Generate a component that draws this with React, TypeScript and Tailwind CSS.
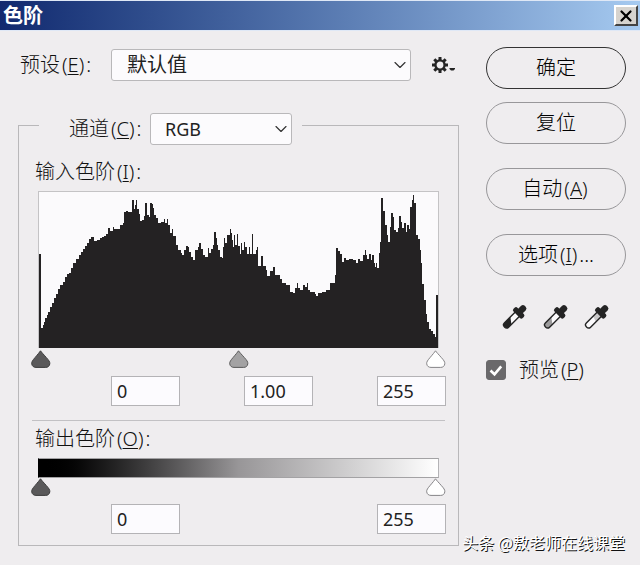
import { useState } from 'react';
import type { ReactNode } from 'react';
import { ChevronDown, X } from 'lucide-react';

// [x, top] pairs, every step runs on to the x of the next one
const HISTOGRAM: [number, number][] = [
  [1, 63], [3, 137], [5, 134], [6, 131], [7, 127], [9, 124], [10, 121], [12, 116], [14, 112], [16, 107],
  [18, 103], [20, 98], [22, 94], [25, 91], [27, 86], [29, 83], [31, 82], [33, 77], [35, 72], [38, 68],
  [41, 64], [43, 61], [45, 58], [47, 55], [49, 52], [51, 48], [53, 46], [56, 50], [59, 49], [62, 47],
  [64, 46], [66, 45], [68, 43], [70, 37], [72, 40], [75, 36], [76, 38], [80, 38], [82, 34], [85, 32],
  [86, 21], [88, 20], [90, 21], [94, 9], [96, 18], [97, 14], [98, 9], [99, 18], [101, 23], [102, 30],
  [104, 29], [106, 25], [107, 12], [109, 24], [111, 26], [112, 12], [114, 13], [115, 17], [116, 24], [118, 27],
  [120, 32], [123, 31], [126, 28], [127, 32], [129, 28], [130, 34], [132, 42], [134, 38], [135, 45], [138, 54],
  [140, 59], [143, 62], [144, 64], [146, 59], [148, 55], [150, 56], [151, 61], [153, 66], [155, 69], [157, 59],
  [160, 56], [161, 52], [163, 58], [165, 64], [167, 66], [170, 57], [171, 62], [173, 58], [175, 54], [176, 41],
  [178, 47], [179, 54], [180, 59], [182, 66], [184, 67], [185, 56], [186, 47], [187, 52], [189, 44], [191, 44],
  [192, 38], [193, 42], [194, 49], [195, 56], [196, 44], [197, 54], [199, 43], [200, 55], [203, 63], [204, 52],
  [205, 59], [207, 51], [208, 56], [210, 63], [212, 56], [213, 63], [215, 43], [216, 63], [219, 59], [220, 56],
  [221, 75], [224, 65], [226, 75], [229, 79], [230, 85], [233, 80], [236, 76], [238, 84], [243, 88], [245, 92],
  [249, 94], [253, 101], [256, 102], [258, 97], [260, 92], [261, 97], [263, 99], [266, 94], [268, 96], [270, 92],
  [271, 99], [273, 101], [278, 103], [279, 105], [281, 102], [285, 101], [289, 99], [293, 92], [298, 84], [299, 57],
  [301, 60], [303, 63], [305, 71], [307, 67], [309, 69], [312, 68], [316, 69], [319, 72], [321, 68], [323, 70],
  [326, 64], [328, 59], [329, 64], [330, 68], [332, 63], [334, 69], [335, 64], [337, 72], [338, 76], [339, 72],
  [340, 77], [342, 62], [343, 51], [344, 7], [346, 20], [348, 34], [350, 44], [351, 51], [353, 36], [354, 22],
  [356, 26], [357, 39], [359, 41], [361, 37], [362, 25], [364, 31], [365, 37], [367, 32], [369, 41], [370, 34],
  [372, 38], [373, 16], [375, 9], [376, 4], [377, 12], [379, 44], [381, 48], [383, 59], [384, 72], [385, 93],
  [387, 109], [389, 123], [390, 131], [392, 138], [394, 140], [396, 143], [398, 146], [399, 104], [401, 157],
];

const HISTOGRAM_PATH = `M1 157${HISTOGRAM.map(([x, y]) => `H${x}V${y}`).join('')}H401Z`;

// Shortcut letter behind a label, e.g. 预设(E)
function Mnemonic({ letter }: { letter: string }) {
  return (
    <span className="mx-[2px] text-[#111]">
      (<u className="decoration-1 underline-offset-2">{letter}</u>)
    </span>
  );
}

function Select({ id, value, pad, size }: { id: string; value: string; pad: string; size: string }) {
  return (
    <span className={`relative flex ${size}`}>
      <select
        id={id}
        defaultValue={value}
        className={`h-8 w-full appearance-none rounded-[3px] border border-[#b9b8ba] bg-[#fcfbfd] ${pad} pr-8 font-normal text-[#222]`}
      >
        <option>{value}</option>
      </select>
      <ChevronDown className="pointer-events-none absolute right-px top-[6px] size-5 text-[#333]" strokeWidth={1.4} />
    </span>
  );
}

function PillButton({ children, primary }: { children: ReactNode; primary?: boolean }) {
  return (
    <button
      type="button"
      className={`h-[42px] w-full rounded-full border text-center text-black ${primary ? 'border-[#333]' : 'border-[#98979a]'}`}
    >
      {children}
    </button>
  );
}

interface HandleProps {
  label: string;
  fill: string;
  stroke: string;
  min: number;
  max: number;
  value: number;
}

function Handle({ label, fill, stroke, min, max, value }: HandleProps) {
  return (
    <label className="relative block h-[18px] w-5">
      <svg viewBox="0 0 20 18" className="h-[18px] w-5">
        <path
          d="M9.5 .8C10.6 2.4 12.4 4.2 15.2 7.4C17.8 10.3 19 11.8 18.8 13.8C18.5 16.2 16.9 17.4 14.7 17.4H5C2.8 17.4 1 16.2 .7 13.8C.5 11.8 1.7 10.3 4.2 7.4C6.9 4.2 8.4 2.4 9.5 .8Z"
          fill={fill}
          stroke={stroke}
        />
      </svg>
      <input
        type="range"
        aria-label={label}
        min={min}
        max={max}
        step="any"
        defaultValue={value}
        className="absolute inset-0 size-full opacity-0"
      />
    </label>
  );
}

function LevelInput({ label, value, onChange }: { label: string; value: string; onChange: (v: string) => void }) {
  return (
    <input
      aria-label={label}
      value={value}
      onChange={(e) => onChange(e.target.value)}
      className="h-[30px] w-[69px] border border-[#b4b3b6] bg-[#fcfbfe] px-[5px] text-lg font-normal text-[#222]"
    />
  );
}

function Dropper({ label, ink, level }: { label: string; ink: string; level: 'low' | 'high' }) {
  return (
    <button type="button" aria-label={label} className="size-[26px]">
      <svg viewBox="0 0 26 26" className="size-[26px]">
        <g transform="translate(22.500 3) rotate(45)">
          <path d="M-3 10V25.5Q-3 28.3 0 28.3Q3 28.3 3 25.5V10Z" fill="#fbfafc" />
          {level === 'low' ? (
            <path d="M-3 17L3 21.5V25.5Q3 28.3 0 28.3Q-3 28.3 -3 25.5Z" fill={ink} />
          ) : (
            <path d="M-3 10H3V18L-3 16Z" fill={ink} />
          )}
          <path d="M-3 10V25.5Q-3 28.3 0 28.3Q3 28.3 3 25.5V10" fill="none" stroke="#242424" strokeWidth="1.4" />
          <rect x="-3.2" y="-1" width="6.4" height="9" rx="2.6" fill="#242424" />
          <rect x="-6.5" y="5.5" width="13" height="5.5" rx="2" fill="#242424" />
        </g>
      </svg>
    </button>
  );
}

export default function App() {
  const [preview, setPreview] = useState(true);
  const [shadows, setShadows] = useState('0');
  const [gamma, setGamma] = useState('1.00');
  const [highlights, setHighlights] = useState('255');
  const [outLow, setOutLow] = useState('0');
  const [outHigh, setOutHigh] = useState('255');

  return (
    <div className="relative min-h-screen bg-[#efedef] font-['Noto_Sans','Noto_Sans_CJK_SC',sans-serif] text-xl font-light leading-6 text-[#111]">
      <header className="flex h-[31px] items-center justify-between border-y border-[#dfe8f6] bg-linear-to-r from-[#12296f] to-[#a6caf0] pl-[3px] pr-[2px]">
        <h1 className="font-bold text-white">色阶</h1>
        <button
          type="button"
          aria-label="关闭"
          className="flex h-[21px] w-6 items-center justify-center border-2 border-b-[#444] border-l-white border-r-[#444] border-t-white bg-[#d6d3ce]"
        >
          <X className="size-[18px] shrink-0 text-black" strokeWidth={3} />
        </button>
      </header>

      <main className="flex gap-[27px] pl-[18px] pr-[14px] pt-4">
        <section className="min-w-0 flex-1 pt-[2px]">
          <div className="flex items-center">
            <label htmlFor="preset" className="w-[93px] shrink-0 pl-[2px]">
              预设<Mnemonic letter="E" />:
            </label>
            <Select id="preset" value="默认值" pad="pl-[15px]" size="flex-1" />
            <button type="button" aria-label="预设选项" className="ml-5 mr-[3px] flex w-[25px] items-center">
              <svg viewBox="0 0 25 18" className="h-[18px] w-[25px]">
                <g stroke="#242424" fill="none">
                  <circle cx="9" cy="9" r="4.6" strokeWidth="2.4" />
                  <path
                    d="M9 1V4M9 14V17M1 9H4M14 9H17M3.3 3.3L5.4 5.4M12.6 12.6L14.7 14.7M3.3 14.7L5.4 12.6M12.6 5.4L14.7 3.3"
                    strokeWidth="3"
                  />
                </g>
                <path d="M18.500 12H24V13L22.500 14.500H20L18.500 13Z" fill="#242424" />
              </svg>
            </button>
          </div>

          <fieldset className="mt-8 border border-[#b9b8ba] px-[13px] pb-[11px]">
            <legend className="ml-[7px] h-6 pl-[30px] pr-[10px]">
              <div className="flex h-8 items-center">
                <label htmlFor="channel" className="w-[81px]">
                  通道<Mnemonic letter="C" />:
                </label>
                <Select id="channel" value="RGB" pad="pl-[14px] text-lg" size="w-[142px]" />
              </div>
            </legend>

            <h2 className="mt-[23px] pl-[3px]">
              输入色阶<Mnemonic letter="I" />:
            </h2>
            <div className="mx-[6px] mt-[7px] border border-b-0 border-[#c4c3c5] bg-[#fbfafc]">
              <svg viewBox="1 1 400 156" preserveAspectRatio="none" className="block h-[156px] w-full" shapeRendering="crispEdges">
                <path d={HISTOGRAM_PATH} fill="#242223" />
              </svg>
            </div>
            <div className="-mx-px mt-[2px] flex justify-between">
              <Handle label="阴影" fill="#5a595a" stroke="#3c3c3c" min={0} max={255} value={0} />
              <Handle label="中间调" fill="#a3a2a3" stroke="#5a5a5a" min={0.01} max={9.99} value={1} />
              <Handle label="高光" fill="#ffffff" stroke="#858487" min={0} max={255} value={255} />
            </div>
            <div className="-mr-px mt-2 flex justify-between pl-[79px]">
              <LevelInput label="输入阴影" value={shadows} onChange={setShadows} />
              <LevelInput label="输入中间调" value={gamma} onChange={setGamma} />
              <LevelInput label="输入高光" value={highlights} onChange={setHighlights} />
            </div>

            <hr className="mt-[14px] border-[#c2c1c4]" />

            <h2 className="mt-[6px] pl-[3px]">
              输出色阶<Mnemonic letter="O" />:
            </h2>
            <div className="mx-[6px] mt-[7px] h-5 border border-l-black border-y-[#a3a2a4] border-r-[#b4b3b6] bg-linear-to-r from-black via-[#989698] to-white" />
            <div className="-mx-px flex justify-between">
              <Handle label="输出黑色" fill="#5a595a" stroke="#3c3c3c" min={0} max={255} value={0} />
              <Handle label="输出白色" fill="#ffffff" stroke="#858487" min={0} max={255} value={255} />
            </div>
            <div className="-mr-px mt-2 flex justify-between pl-[79px]">
              <LevelInput label="输出阴影" value={outLow} onChange={setOutLow} />
              <LevelInput label="输出高光" value={outHigh} onChange={setOutHigh} />
            </div>
          </fieldset>
        </section>

        <aside className="flex w-[140px] shrink-0 flex-col">
          <div className="flex flex-col gap-[13px]">
            <PillButton primary>确定</PillButton>
            <PillButton>复位</PillButton>
          </div>
          <div className="mt-6 flex flex-col gap-6">
            <PillButton>
              自动<Mnemonic letter="A" />
            </PillButton>
            <PillButton>
              选项<Mnemonic letter="I" />...
            </PillButton>
          </div>
          <div className="mt-7 flex gap-[15px] pl-4">
            <Dropper label="设置黑场" ink="#242424" level="low" />
            <Dropper label="设置灰场" ink="#9b9a9b" level="low" />
            <Dropper label="设置白场" ink="#c9c8c9" level="high" />
          </div>
          <label className="mt-7 flex items-center gap-[13px]">
            <span className="relative flex size-5">
              <input
                type="checkbox"
                checked={preview}
                onChange={(e) => setPreview(e.target.checked)}
                className="size-5 appearance-none rounded-[3px] border border-[#6a696b] checked:bg-[#6a696b]"
              />
              {preview && (
                <svg viewBox="0 0 20 20" className="pointer-events-none absolute inset-0 size-5">
                  <path d="M4.500 10.500L8.500 14.300L15.200 6.300" fill="none" stroke="#fff" strokeWidth="2.6" />
                </svg>
              )}
            </span>
            <span>
              预览<Mnemonic letter="P" />
            </span>
          </label>
        </aside>
      </main>

      <p className="absolute bottom-[11px] right-[15px] font-['Noto_Sans_CJK_SC',sans-serif] text-base font-normal text-white [text-shadow:1px_1px_0_#111]">
        头条 @敖老师在线课堂
      </p>
    </div>
  );
}
